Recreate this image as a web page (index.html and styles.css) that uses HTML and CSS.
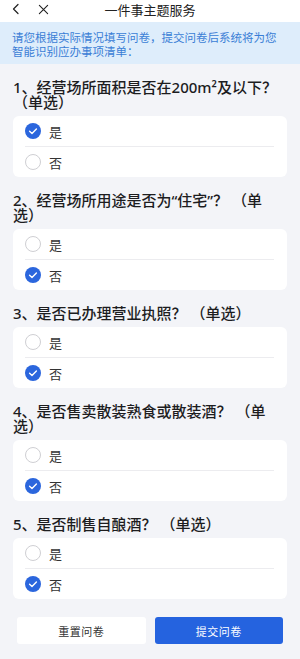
FILE: index.html
```html
<!DOCTYPE html>
<html lang="zh-CN">
<head>
<meta charset="utf-8">
<title>一件事主题服务</title>
<link rel="stylesheet" href="styles.css">
</head>
<body>
<div class="page">
  <header class="topbar">
    <div class="nav-icons">
      <svg class="nav-icon" viewBox="0 0 12 12" width="12" height="12"><path d="M8 1.5 L3.5 6 L8 10.5" fill="none" stroke="#222" stroke-width="1.2" stroke-linecap="round" stroke-linejoin="round"/></svg>
      <svg class="nav-icon close" viewBox="0 0 12 12" width="12" height="12"><path d="M1.5 1.5 L10.5 10.5 M10.5 1.5 L1.5 10.5" fill="none" stroke="#222" stroke-width="1.2" stroke-linecap="round"/></svg>
    </div>
    <h1 class="title">一件事主题服务</h1>
  </header>

  <div class="notice">请您根据实际情况填写问卷，提交问卷后系统将为您智能识别应办事项清单：</div>

  <main class="survey">
    <section class="question">
      <h2 class="q-title">1、经营场所面积是否在200m²及以下？（单选）</h2>
      <div class="card">
        <div class="option"><span class="radio checked"><svg viewBox="0 0 16 16" width="16" height="16"><circle cx="8" cy="8" r="8" fill="#2b66dd"/><path d="M4.6 8.2 L7 10.4 L11.4 5.9" fill="none" stroke="#fff" stroke-width="1.4" stroke-linecap="round" stroke-linejoin="round"/></svg></span><span class="label">是</span></div>
        <div class="option"><span class="radio"></span><span class="label">否</span></div>
      </div>
    </section>

    <section class="question">
      <h2 class="q-title">2、经营场所用途是否为“住宅”？ （单选）</h2>
      <div class="card">
        <div class="option"><span class="radio"></span><span class="label">是</span></div>
        <div class="option"><span class="radio checked"><svg viewBox="0 0 16 16" width="16" height="16"><circle cx="8" cy="8" r="8" fill="#2b66dd"/><path d="M4.6 8.2 L7 10.4 L11.4 5.9" fill="none" stroke="#fff" stroke-width="1.4" stroke-linecap="round" stroke-linejoin="round"/></svg></span><span class="label">否</span></div>
      </div>
    </section>

    <section class="question">
      <h2 class="q-title">3、是否已办理营业执照？ （单选）</h2>
      <div class="card">
        <div class="option"><span class="radio"></span><span class="label">是</span></div>
        <div class="option"><span class="radio checked"><svg viewBox="0 0 16 16" width="16" height="16"><circle cx="8" cy="8" r="8" fill="#2b66dd"/><path d="M4.6 8.2 L7 10.4 L11.4 5.9" fill="none" stroke="#fff" stroke-width="1.4" stroke-linecap="round" stroke-linejoin="round"/></svg></span><span class="label">否</span></div>
      </div>
    </section>

    <section class="question">
      <h2 class="q-title">4、是否售卖散装熟食或散装酒？ （单选）</h2>
      <div class="card">
        <div class="option"><span class="radio"></span><span class="label">是</span></div>
        <div class="option"><span class="radio checked"><svg viewBox="0 0 16 16" width="16" height="16"><circle cx="8" cy="8" r="8" fill="#2b66dd"/><path d="M4.6 8.2 L7 10.4 L11.4 5.9" fill="none" stroke="#fff" stroke-width="1.4" stroke-linecap="round" stroke-linejoin="round"/></svg></span><span class="label">否</span></div>
      </div>
    </section>

    <section class="question">
      <h2 class="q-title">5、是否制售自酿酒？ （单选）</h2>
      <div class="card">
        <div class="option"><span class="radio"></span><span class="label">是</span></div>
        <div class="option"><span class="radio checked"><svg viewBox="0 0 16 16" width="16" height="16"><circle cx="8" cy="8" r="8" fill="#2b66dd"/><path d="M4.6 8.2 L7 10.4 L11.4 5.9" fill="none" stroke="#fff" stroke-width="1.4" stroke-linecap="round" stroke-linejoin="round"/></svg></span><span class="label">否</span></div>
      </div>
    </section>
  </main>

  <footer class="actions">
    <button class="btn btn-reset">重置问卷</button>
    <button class="btn btn-submit">提交问卷</button>
  </footer>
</div>
</body>
</html>
```

FILE: styles.css
```css
* { box-sizing: border-box; }
html, body {
  margin: 0;
  padding: 0;
  background: #f3f4f8;
  font-family: "Noto Sans", "Noto Sans CJK SC", sans-serif;
  color: #222;
}
.page {
  width: 300px;
  min-height: 659px;
  background: #f3f4f8;
}
.topbar {
  position: relative;
  height: 22px;
  background: #fff;
  display: flex;
  align-items: center;
  justify-content: center;
}
.nav-icons {
  position: absolute;
  left: 10px;
  top: 3px;
  display: flex;
  gap: 16px;
  align-items: center;
}
.nav-icon { display: block; width: 12px; height: 12px; }
.close { width: 11px; height: 11px; }
.title {
  margin: 0;
  font-size: 13px;
  font-weight: 400;
  line-height: 16px;
  color: #222;
  transform: translateY(-1px);
}
.notice {
  background: #deedfb;
  color: #3a7ed6;
  font-size: 11.5px;
  line-height: 13.5px;
  padding: 9px 14px 6px 12px;
  height: 42px;
  overflow: hidden;
}
.survey {
  padding: 0 13px;
}
.question { padding-top: 16px; }
.q-title {
  margin: 0 0 6px 0;
  padding-right: 6px;
  font-size: 15px;
  line-height: 15px;
  font-weight: 500;
  color: #1d1d1f;
}
.card {
  background: #fff;
  border-radius: 6px;
  padding: 0 13px 0 12px;
}
.option {
  height: 30px;
  display: flex;
  align-items: center;
}
.option + .option {
  height: 31px;
  border-top: 1px solid #ececef;
}
.radio {
  width: 16px;
  height: 16px;
  border-radius: 50%;
  border: 1px solid #cfcfd3;
  flex: none;
}
.radio.checked { border: none; }
.radio svg { display: block; }
.label {
  margin-left: 8px;
  font-size: 13px;
  color: #333;
}
.actions {
  display: flex;
  gap: 9px;
  padding: 18px 17px 0 17px;
}
.btn {
  flex: 1;
  height: 27px;
  border: none;
  border-radius: 3px;
  font-family: "Noto Sans CJK SC", sans-serif;
  font-size: 11px;
  letter-spacing: 0.5px;
  padding: 0;
}
.btn-reset { background: #fff; color: #333; }
.btn-submit { background: #2563df; color: #fff; }
```
